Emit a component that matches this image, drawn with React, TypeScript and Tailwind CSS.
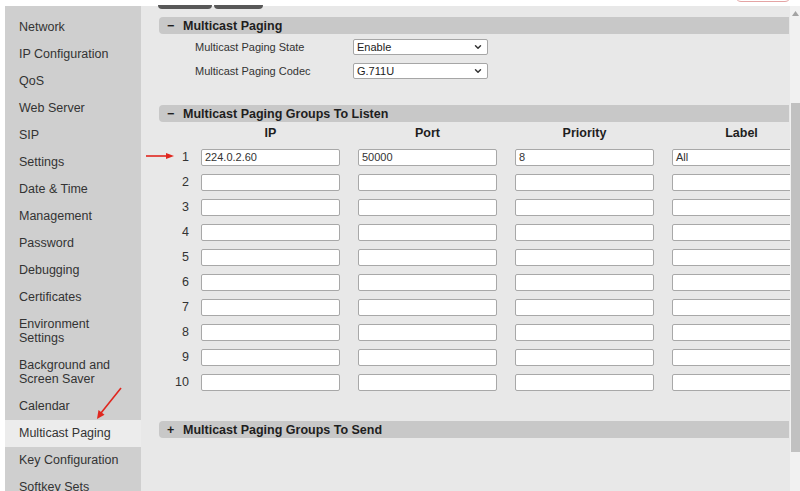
import React from "react";
import { ChevronDown } from "lucide-react";

const navItems: string[][] = [
  ["Network"],
  ["IP Configuration"],
  ["QoS"],
  ["Web Server"],
  ["SIP"],
  ["Settings"],
  ["Date & Time"],
  ["Management"],
  ["Password"],
  ["Debugging"],
  ["Certificates"],
  ["Environment", "Settings"],
  ["Background and", "Screen Saver"],
  ["Calendar"],
  ["Multicast Paging"],
  ["Key Configuration"],
  ["Softkey Sets"],
];

const rows = [
  { ip: "224.0.2.60", port: "50000", prio: "8", label: "All" },
  ...Array.from({ length: 9 }, () => ({ ip: "", port: "", prio: "", label: "" })),
];

function SectionBar({ sign, title }: { sign: string; title: string }) {
  return (
    <div className="mr-[1px] flex h-[17px] items-center rounded-l-[4px] bg-[#c8c8c8] pl-[8px] pt-[1px] text-[12.5px] font-bold leading-none text-[#1e1e1e]">
      <span className="w-[16px]">{sign}</span>
      <span>{title}</span>
    </div>
  );
}

function Select({ value }: { value: string }) {
  return (
    <div className="flex h-[16px] w-[135px] items-center justify-between rounded-[2px] border border-[#a6a6a6] bg-white pl-[3px] pr-[4px] text-[11px] text-[#222]">
      <span>{value}</span>
      <ChevronDown size={10} strokeWidth={3.5} color="#333" />
    </div>
  );
}

function Field({ value }: { value: string }) {
  return (
    <div className="flex h-[17px] w-[139px] shrink-0 items-center rounded-[2px] border border-[#a8a8a8] bg-white pl-[3px] text-[11px] text-[#333]">
      {value}
    </div>
  );
}

export default function App() {
  return (
    <div
      className="relative flex h-[491px] w-[800px] flex-col overflow-hidden bg-white"
      style={{ fontFamily: '"Liberation Sans", Arial, sans-serif' }}
    >
      {/* top strip */}
      <div className="h-[6px] shrink-0 bg-white" />
      {/* partially visible buttons */}
      <div className="absolute left-[158px] top-[5px] flex gap-[2px]">
        <div className="h-[4px] w-[54px] rounded-b-[4px] bg-[#585858]" />
        <div className="h-[4px] w-[49px] rounded-b-[4px] bg-[#585858]" />
      </div>
      <div className="absolute left-[735px] top-[-10px] h-[12px] w-[56px] rounded-[6px] border border-[#e4a4a4] bg-white" />

      <div className="flex min-h-0 flex-1">
        {/* sidebar */}
        <div className="w-[5px] shrink-0 bg-white" />
        <nav className="w-[136px] shrink-0 bg-[#cfcfcf] pt-[7.5px] text-[12.5px] text-[#333]">
          {navItems.map((lines) => {
            const active = lines[0] === "Multicast Paging";
            return (
              <div
                key={lines.join(" ")}
                className={`py-[6.5px] pl-[14px] leading-[14px] ${active ? "bg-[#ececec]" : ""}`}
              >
                {lines.map((l) => (
                  <div key={l}>{l}</div>
                ))}
              </div>
            );
          })}
        </nav>

        {/* main */}
        <main className="min-w-0 flex-1 overflow-hidden bg-[#e8e8e8] pl-[18px] pt-[11px]">
          <SectionBar sign="−" title="Multicast Paging" />
          <div className="mt-[5px] flex flex-col gap-[7px] text-[11px] text-[#333]">
            <div className="flex items-center">
              <span className="w-[194px] shrink-0 pl-[36px]">Multicast Paging State</span>
              <Select value="Enable" />
            </div>
            <div className="flex items-center">
              <span className="w-[194px] shrink-0 pl-[36px]">Multicast Paging Codec</span>
              <Select value="G.711U" />
            </div>
          </div>

          <div className="mt-[26px]">
            <SectionBar sign="−" title="Multicast Paging Groups To Listen" />
          </div>

          <div className="flex h-[23px] items-center text-[12.5px] font-bold text-[#1e1e1e]">
            <div className="w-[42px] shrink-0" />
            <div className="flex gap-[18px]">
              {["IP", "Port", "Priority", "Label"].map((h) => (
                <div key={h} className="w-[139px] shrink-0 text-center">
                  {h}
                </div>
              ))}
            </div>
          </div>

          {rows.map((r, i) => (
            <div key={i} className="flex h-[25px] items-center">
              <div className="w-[30px] shrink-0 text-right text-[12.5px] text-[#333]">{i + 1}</div>
              <div className="ml-[12px] flex gap-[18px]">
                <Field value={r.ip} />
                <Field value={r.port} />
                <Field value={r.prio} />
                <Field value={r.label} />
              </div>
            </div>
          ))}

          <div className="mt-[26px]">
            <SectionBar sign="+" title="Multicast Paging Groups To Send" />
          </div>
        </main>

        {/* scrollbar */}
        <div className="flex w-[10px] shrink-0 flex-col items-center bg-[#f1f1f1]">
          <svg width="7" height="5" viewBox="0 0 7 5" className="mt-[5px]">
            <polygon points="3.5,0 7,5 0,5" fill="#a3a3a3" />
          </svg>
          <div className="mt-[87px] h-[349px] w-[9px] bg-[#c1c1c1]" />
        </div>
      </div>

      {/* red annotation arrows */}
      <svg className="pointer-events-none absolute left-0 top-0" width="800" height="491">
        <line x1="146" y1="156" x2="168" y2="156" stroke="#e0261e" strokeWidth="1.6" />
        <polygon points="174,156 166,153 166,159" fill="#e0261e" />
        <line x1="121" y1="388" x2="101" y2="413" stroke="#e0261e" strokeWidth="1.6" />
        <polygon points="97,419 98.5,410 104.5,414.8" fill="#e0261e" />
      </svg>
    </div>
  );
}
